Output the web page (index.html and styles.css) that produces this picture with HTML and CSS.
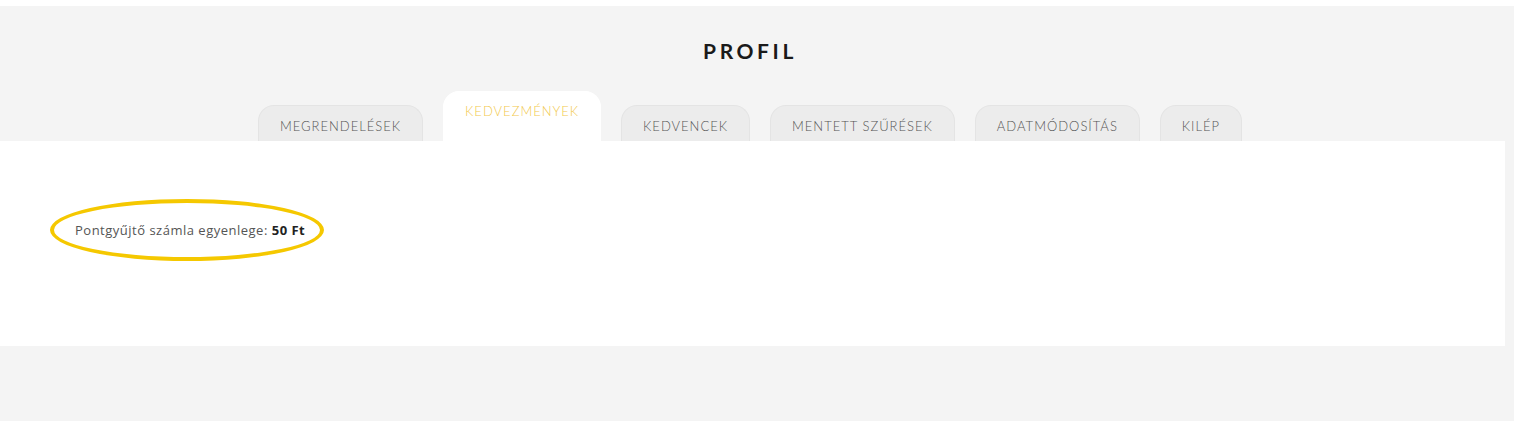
FILE: index.html
```html
<!DOCTYPE html>
<html lang="hu">
<head>
    <meta charset="UTF-8">
    <meta name="viewport" content="width=device-width, initial-scale=1.0">
    <title>Profil</title>
    <link rel="stylesheet" href="styles.css">
</head>
<body>
    <div class="profile-head">
        <h1 class="title">PROFIL</h1>
        <ul class="tabs">
            <li class="tab">MEGRENDELÉSEK</li>
            <li class="tab active">KEDVEZMÉNYEK</li>
            <li class="tab">KEDVENCEK</li>
            <li class="tab">MENTETT SZŰRÉSEK</li>
            <li class="tab">ADATMÓDOSÍTÁS</li>
            <li class="tab">KILÉP</li>
        </ul>
    </div>
    <div class="panel">
        <p class="balance">Pontgyűjtő számla egyenlege: <b>50 Ft</b></p>
    </div>
</body>
</html>
```

FILE: styles.css
```css
body {
    margin: 0;
    background-color: #f4f4f4;
    border-top: 6px solid #fff;
    font-family: "Lato", "Open Sans", sans-serif;
    color: #555;
    height: 415px;
}

.profile-head {
    padding-right: 14px;
    text-align: center;
}

.title {
    margin: 0;
    padding-top: 32px;
    height: 32px;
    font-size: 21px;
    line-height: 26px;
    letter-spacing: 3.6px;
    color: #1a1a1a;
    font-weight: 700;
}

.tabs {
    list-style: none;
    margin: 21px 0 0;
    padding: 0;
    display: flex;
    justify-content: center;
    align-items: flex-end;
    gap: 20px;
}

.tab {
    height: 36px;
    box-sizing: border-box;
    padding: 12px 21px 0;
    font-size: 13px;
    font-weight: 300;
    line-height: 16px;
    letter-spacing: 1px;
    color: #555;
    background-color: #ececec;
    border: 1px solid #e4e4e4;
    border-bottom: none;
    border-radius: 16px 16px 0 0;
}

.tab.active {
    height: 50px;
    padding-top: 11px;
    background-color: #fff;
    border-color: #fff;
    color: #f2c94c;
}

.panel {
    background-color: #fff;
    margin-right: 9px;
    height: 205px;
    padding: 58px 0 0 50px;
    box-sizing: border-box;
}

.balance {
    display: inline-block;
    margin: 0;
    padding: 19px 15px 19px 21px;
    font-family: "Open Sans", sans-serif;
    font-size: 13px;
    line-height: 16px;
    letter-spacing: 0.5px;
    border: 4px solid #f5c800;
    border-radius: 50%;
}

.balance b {
    color: #222;
}
```
